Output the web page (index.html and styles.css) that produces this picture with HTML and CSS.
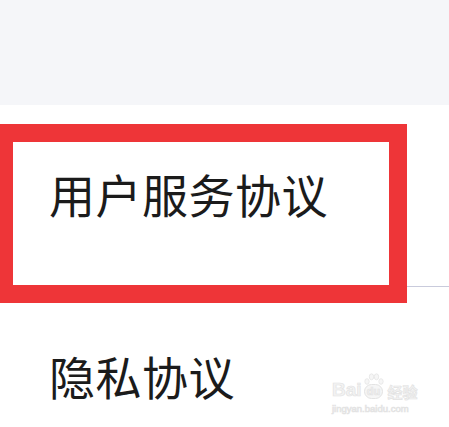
FILE: index.html
```html
<!DOCTYPE html>
<html lang="zh">
<head>
<meta charset="utf-8">
<link rel="stylesheet" href="styles.css">
</head>
<body>
<div class="page">
  <div class="top"></div>
  <div class="list">
    <div class="row first"><span class="label">用户服务协议</span></div>
    <div class="row"><span class="label">隐私协议</span></div>
  </div>
  <div class="highlight"></div>
  <div class="watermark">
    <div class="wm-logo">
      <span class="wm-bai">Bai</span>
      <span class="wm-du">
        <svg class="wm-paw" width="22" height="12" viewBox="0 0 22 12">
          <ellipse cx="4" cy="8.5" rx="2.2" ry="2.8" />
          <ellipse cx="8.5" cy="3.8" rx="2.2" ry="3" />
          <ellipse cx="13.5" cy="3.8" rx="2.2" ry="3" />
          <ellipse cx="18" cy="8.5" rx="2.2" ry="2.8" />
        </svg>
        <span class="wm-du-text">du</span>
      </span>
      <span class="wm-jy">经验</span>
    </div>
    <div class="wm-url">jingyan.baidu.com</div>
  </div>
</div>
</body>
</html>
```
FILE: styles.css
```css
html, body {
  margin: 0;
  padding: 0;
  background: #ffffff;
}
.page {
  position: relative;
  width: 449px;
  height: 427px;
  overflow: hidden;
  font-family: "Noto Sans CJK SC", "Noto Sans", sans-serif;
}
.top {
  height: 105px;
  background: #f5f6f9;
}
.list {
  display: flex;
  flex-direction: column;
}
.row {
  height: 181px;
  display: flex;
  align-items: center;
  padding-left: 49px;
  padding-bottom: 6px;
  box-sizing: border-box;
}
.row.first {
  border-bottom: 1px solid #c9cbdc;
  height: 182px;
}
.label {
  font-size: 46px;
  line-height: 1;
  color: #1b1b1b;
  letter-spacing: 0.5px;
}
.highlight {
  position: absolute;
  left: -5px;
  top: 124px;
  width: 376px;
  height: 143px;
  border: 18px solid #ee3538;
}
.watermark {
  position: absolute;
  left: 332px;
  top: 373px;
  white-space: nowrap;
  color: #f3f3f3;
  font-family: "Liberation Sans", Arial, sans-serif;
  -webkit-text-stroke: 0.7px #e3e3e3;
}
.wm-logo {
  display: flex;
  align-items: flex-end;
  gap: 1px;
  font-size: 19px;
  font-weight: bold;
  line-height: 1;
}
.wm-du {
  display: flex;
  flex-direction: column;
  align-items: center;
}
.wm-paw {
  fill: #f6f6f6;
  stroke: #e3e3e3;
  stroke-width: 0.7;
  margin-bottom: -1px;
}
.wm-du-text {
  font-size: 11px;
  border: 1.5px solid #e3e3e3;
  border-radius: 8px;
  padding: 0 2px;
  line-height: 13px;
  background: #f6f6f6;
}
.wm-jy {
  font-family: "Noto Sans CJK SC", sans-serif;
  font-size: 15px;
  margin-left: 2px;
}
.wm-url {
  font-size: 9.5px;
  margin-top: 4px;
}
```
